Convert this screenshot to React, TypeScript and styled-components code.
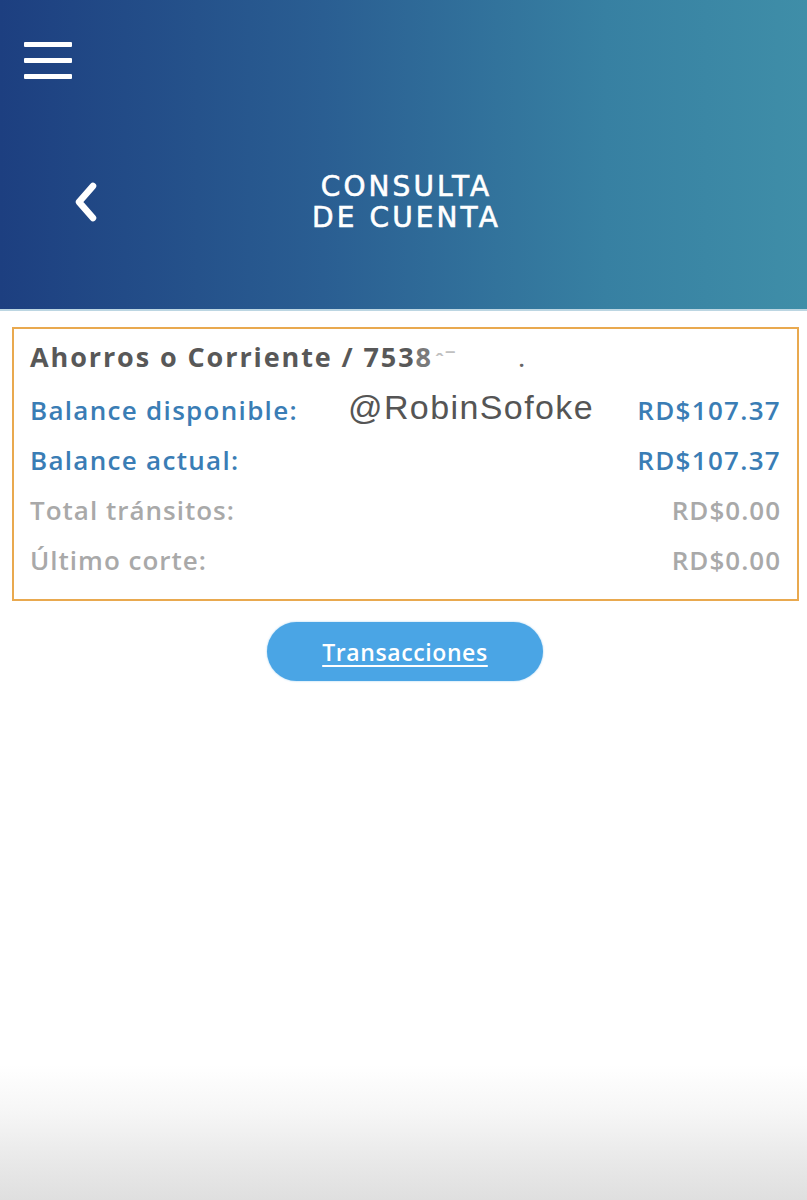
import styled, { createGlobalStyle } from "styled-components";

const Global = createGlobalStyle`
  html, body {
    margin: 0;
    padding: 0;
    background: #ffffff;
  }
  body {
    font-family: "Open Sans", "Liberation Sans", sans-serif;
  }
`;

const rows = [
  { label: "Balance disponible:", value: "RD$107.37", tone: "blue" },
  { label: "Balance actual:", value: "RD$107.37", tone: "blue" },
  { label: "Total tránsitos:", value: "RD$0.00", tone: "gray" },
  { label: "Último corte:", value: "RD$0.00", tone: "gray" },
];

const App = () => {
  return (
    <Page>
      <Global />
      <Header>
        <MenuBtn aria-label="menu">
          <MenuLine />
          <MenuLine />
          <MenuLine />
        </MenuBtn>
        <TitleBar>
          <BackBtn aria-label="back">
            <svg width="30" height="42" viewBox="0 0 30 42">
              <path
                d="M22 5 L8 21 L22 37"
                fill="none"
                stroke="#ffffff"
                strokeWidth="6.5"
                strokeLinecap="round"
                strokeLinejoin="round"
              />
            </svg>
          </BackBtn>
          <Title>
            CONSULTA
            <br />
            DE CUENTA
          </Title>
          <div />
        </TitleBar>
      </Header>

      <Card>
        <AccountTitle>
          Ahorros o Corriente / 753<Faded>8</Faded>
          <Masked>ˆ¯</Masked>
          <Dot>.</Dot>
        </AccountTitle>
        {rows.map((r) => (
          <Row key={r.label} tone={r.tone}>
            <span>{r.label}</span>
            <span>{r.value}</span>
          </Row>
        ))}
        <Watermark>@RobinSofoke</Watermark>
      </Card>

      <ButtonWrap>
        <ActionButton>Transacciones</ActionButton>
      </ButtonWrap>

      <Spacer />
      <BottomFade />
    </Page>
  );
};

export default App;

const Page = styled.div`
  width: 807px;
  height: 1200px;
  display: flex;
  flex-direction: column;
  overflow: hidden;
  background: #ffffff;
`;

const Header = styled.div`
  height: 309px;
  background: linear-gradient(90deg, #1d3f80 0%, #2a5e92 40%, #3780a2 75%, #3f8ea8 100%);
  border-bottom: 2px solid #bcd6e2;
  display: flex;
  flex-direction: column;
`;

const MenuBtn = styled.div`
  margin: 42px 0 0 24px;
  width: 48px;
  display: flex;
  flex-direction: column;
  gap: 11px;
`;

const MenuLine = styled.div`
  height: 5px;
  background: #ffffff;
  border-radius: 1px;
`;

const TitleBar = styled.div`
  margin-top: 92px;
  display: grid;
  grid-template-columns: 1fr auto 1fr;
  align-items: center;
`;

const BackBtn = styled.div`
  margin-left: 71px;
  display: flex;
  align-items: center;
`;

const Title = styled.div`
  text-align: center;
  color: #ffffff;
  font-family: "DejaVu Sans", "Open Sans", sans-serif;
  font-size: 28px;
  line-height: 31px;
  letter-spacing: 3.1px;
  -webkit-text-stroke: 0.6px #ffffff;
  margin-left: 6px;
`;

const Card = styled.div`
  position: relative;
  margin: 16px 8px 0 12px;
  border: 2px solid #e9a94f;
  padding: 10px 16px 14px 16px;
  display: flex;
  flex-direction: column;
`;

const AccountTitle = styled.div`
  font-size: 27px;
  font-weight: 700;
  letter-spacing: 1.9px;
  color: #585858;
  height: 36px;
  line-height: 36px;
  margin-bottom: 10px;
  white-space: nowrap;
`;

const Faded = styled.span`
  color: #7a7a7a;
`;

const Masked = styled.span`
  color: #c0c0c0;
  font-size: 18px;
  margin-left: 2px;
`;

const Dot = styled.span`
  margin-left: 62px;
  color: #666;
  font-size: 20px;
`;

const Row = styled.div<{ tone: string }>`
  display: flex;
  justify-content: space-between;
  align-items: center;
  height: 50px;
  font-size: 26px;
  letter-spacing: ${(p) => (p.tone === "blue" ? "1.3px" : "1px")};
  font-weight: 600;
  color: ${(p) => (p.tone === "blue" ? "#3a7db5" : "#a9a9a9")};
`;

const Watermark = styled.div`
  position: absolute;
  left: 334px;
  top: 59px;
  font-family: "Liberation Sans", Arial, sans-serif;
  font-size: 34px;
  letter-spacing: 1.4px;
  color: #555555;
`;

const ButtonWrap = styled.div`
  display: flex;
  justify-content: center;
  margin-top: 21px;
`;

const ActionButton = styled.div`
  width: 276px;
  height: 59px;
  margin-left: 3px;
  border-radius: 30px;
  background: #4aa5e5;
  box-shadow: 0 0 2px rgba(74, 165, 229, 0.6);
  color: #ffffff;
  font-size: 23px;
  font-weight: 600;
  letter-spacing: 0.6px;
  text-decoration: underline;
  text-decoration-thickness: 2px;
  text-underline-offset: 4px;
  display: flex;
  align-items: center;
  justify-content: center;
`;

const Spacer = styled.div`
  flex: 1;
`;

const BottomFade = styled.div`
  height: 135px;
  background: linear-gradient(180deg, #ffffff 0%, #f6f6f6 35%, #e9e9e9 70%, #dfdfdf 100%);
`;
